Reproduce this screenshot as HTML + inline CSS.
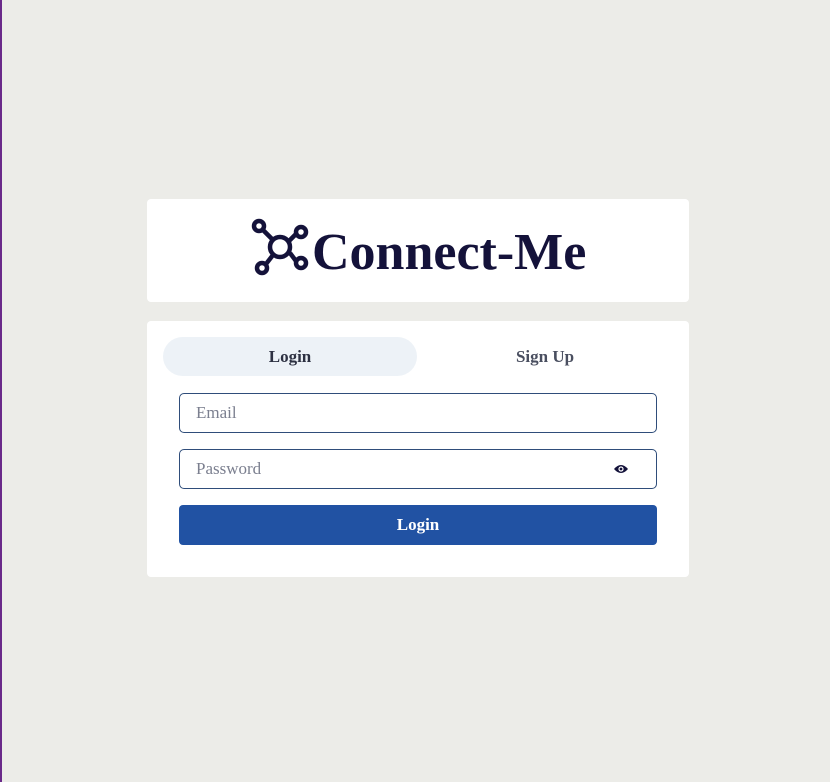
<!DOCTYPE html>
<html><head><style>
html,body{margin:0;padding:0;}
body{width:830px;height:782px;background:#ecece8;position:relative;overflow:hidden;font-family:"Liberation Serif","DejaVu Serif",serif;}
.edge{position:absolute;left:0;top:0;width:2px;height:782px;background:#6a2a8a;}
.card{position:absolute;left:147px;width:542px;background:#fff;border-radius:4px;}
.logo{top:199px;height:103px;}
.form{top:321px;height:256px;}
.title{position:absolute;left:312px;top:221px;font-size:52px;font-weight:bold;color:#14123a;line-height:64px;white-space:nowrap;}
.tab{position:absolute;top:337px;height:39px;width:254px;border-radius:20px;text-align:center;line-height:39px;font-size:17px;font-weight:bold;}
.input{position:absolute;left:179px;border:1px solid #2f4d7a;border-radius:5px;font-size:17px;color:#7b7f8f;line-height:38px;padding-left:16px;box-sizing:border-box;width:478px;height:40px;}
.btn{position:absolute;left:179px;top:505px;width:478px;height:40px;background:#2152a3;border-radius:4px;color:#fff;text-align:center;line-height:40px;font-size:17px;font-weight:bold;}
</style></head><body>
<div class="edge"></div>
<div class="card logo"></div>
<svg style="position:absolute;left:250px;top:217px" width="60" height="60" viewBox="0 0 60 60" fill="none" stroke="#14123a" stroke-width="4.5">
<circle cx="30" cy="30" r="10"/>
<circle cx="9" cy="9" r="5"/><circle cx="51" cy="15" r="5"/><circle cx="12" cy="51" r="5"/><circle cx="51" cy="46" r="5"/>
<line x1="13" y1="13" x2="23" y2="23"/><line x1="46" y1="17" x2="39" y2="24"/><line x1="16" y1="47" x2="23" y2="38"/><line x1="46" y1="44" x2="40" y2="36"/>
</svg>
<div class="title">Connect-Me</div>
<div class="card form"></div>
<div class="tab" style="left:163px;background:#edf2f7;color:#2d3142;">Login</div>
<div class="tab" style="left:418px;color:#4a4f60;">Sign Up</div>
<div class="input" style="top:393px;">Email</div>
<div class="input" style="top:449px;">Password</div>
<svg style="position:absolute;left:613px;top:463px" width="16" height="12" viewBox="0 0 16 12"><path d="M1 6Q8 -2 15 6Q8 14 1 6Z" fill="#14123a"/><circle cx="8" cy="6" r="2.6" fill="#fff"/><circle cx="8" cy="6" r="1.4" fill="#14123a"/></svg>
<div class="btn">Login</div>
</body></html>
